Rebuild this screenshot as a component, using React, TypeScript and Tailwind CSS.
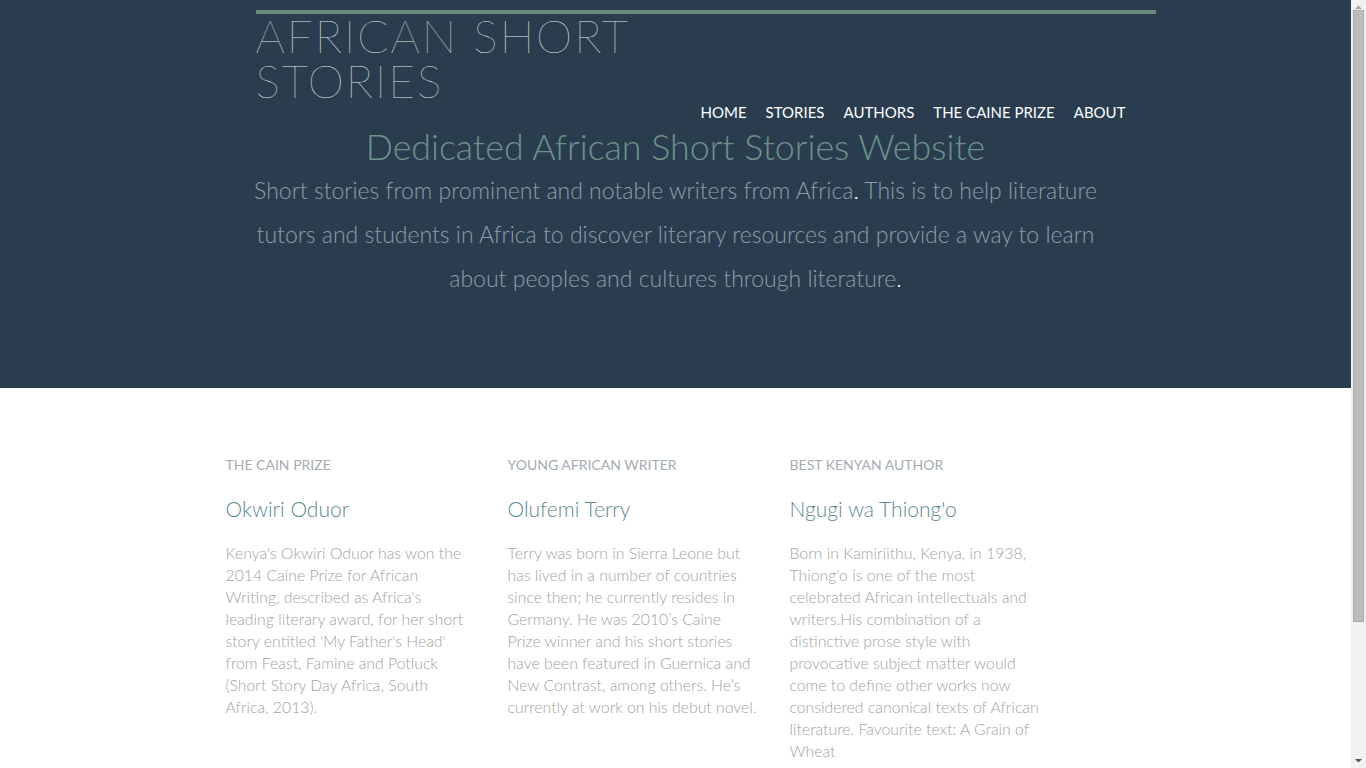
import React from "react";

const cols = [
  {
    label: "THE CAIN PRIZE",
    name: "Okwiri Oduor",
    lines: [
      "Kenya's Okwiri Oduor has won the",
      "2014 Caine Prize for African",
      "Writing, described as Africa's",
      "leading literary award, for her short",
      "story entitled 'My Father's Head'",
      "from Feast, Famine and Potluck",
      "(Short Story Day Africa, South",
      "Africa, 2013).",
    ],
  },
  {
    label: "YOUNG AFRICAN WRITER",
    name: "Olufemi Terry",
    lines: [
      "Terry was born in Sierra Leone but",
      "has lived in a number of countries",
      "since then; he currently resides in",
      "Germany. He was 2010\u2019s Caine",
      "Prize winner and his short stories",
      "have been featured in Guernica and",
      "New Contrast, among others. He\u2019s",
      "currently at work on his debut novel.",
    ],
  },
  {
    label: "BEST KENYAN AUTHOR",
    name: "Ngugi wa Thiong'o",
    lines: [
      "Born in Kamiriithu, Kenya, in 1938,",
      "Thiong'o is one of the most",
      "celebrated African intellectuals and",
      "writers.His combination of a",
      "distinctive prose style with",
      "provocative subject matter would",
      "come to define other works now",
      "considered canonical texts of African",
      "literature. Favourite text: A Grain of",
      "Wheat",
    ],
  },
];

function Scrollbar() {
  return (
    <div className="fixed right-0 top-0 h-screen w-[15px] bg-[#f1f1f1] flex flex-col items-center">
      <svg width="15" height="15" viewBox="0 0 15 15" className="shrink-0">
        <path d="M4 9 L7.5 5.5 L11 9 Z" fill="#a3a3a3" />
      </svg>
      <div className="w-[11px] h-[612px] mt-[-5px] bg-[#bcbcbc] border border-[#ababab]" />
      <div className="flex-1" />
      <svg width="15" height="15" viewBox="0 0 15 15" className="shrink-0">
        <path d="M4 6 L7.5 9.5 L11 6 Z" fill="#505050" />
      </svg>
    </div>
  );
}

export default function App() {
  return (
    <div className="font-['Lato','Liberation_Sans',sans-serif] bg-white min-h-[925px]">
      <div className="w-[1351px]">
        <header className="bg-[#2a3d4f] h-[388px]">
          <div className="w-[960px] mx-auto pl-[60px] pt-[10px]">
            <div className="h-[4px] bg-[#6b8a7e]" />
            <div className="flex justify-between items-start">
              <h1 className="w-[420px] text-[46px] leading-[45px] font-thin tracking-[2px] text-[#e4e9ec] mt-[-1px]">
                AFRICAN SHORT STORIES
              </h1>
              <nav className="flex gap-[19px] pr-[30px] pt-[88px] text-[15px] leading-[20px] text-white">
                <a>HOME</a>
                <a>STORIES</a>
                <a>AUTHORS</a>
                <a>THE CAINE PRIZE</a>
                <a>ABOUT</a>
              </nav>
            </div>
          </div>
          <div className="text-center">
            <h2 className="mt-[3px] text-[35.8px] leading-[43px] font-light text-[#6a938a]">
              Dedicated African Short Stories Website
            </h2>
            <p className="w-[880px] mx-auto text-[23px] leading-[44px] font-light text-[#8d9dab]">
              Short stories from prominent and notable writers from Africa<span className="text-white">.</span> This is to help literature tutors and students in Africa to discover literary resources and provide a way to learn about peoples and cultures through literature<span className="text-white">.</span>
            </p>
          </div>
        </header>
        <section className="w-[900px] mx-auto pt-[67px] pb-[120px]">
          <div className="flex gap-[33.5px]">
            {cols.map((c) => (
              <div key={c.name} className="w-[248.5px]">
                <div className="text-[14px] leading-[20px] text-[#a3acb5]">{c.label}</div>
                <div className="mt-[21px] text-[21px] leading-[26px] font-light text-[#5b8a94]">{c.name}</div>
                <p className="mt-[20px] text-[15.8px] leading-[22px] font-light text-[#a3a3a3] whitespace-nowrap">
                  {c.lines.map((l, i) => (
                    <React.Fragment key={i}>
                      {l}
                      {i < c.lines.length - 1 && <br />}
                    </React.Fragment>
                  ))}
                </p>
              </div>
            ))}
          </div>
        </section>
      </div>
      <Scrollbar />
    </div>
  );
}
